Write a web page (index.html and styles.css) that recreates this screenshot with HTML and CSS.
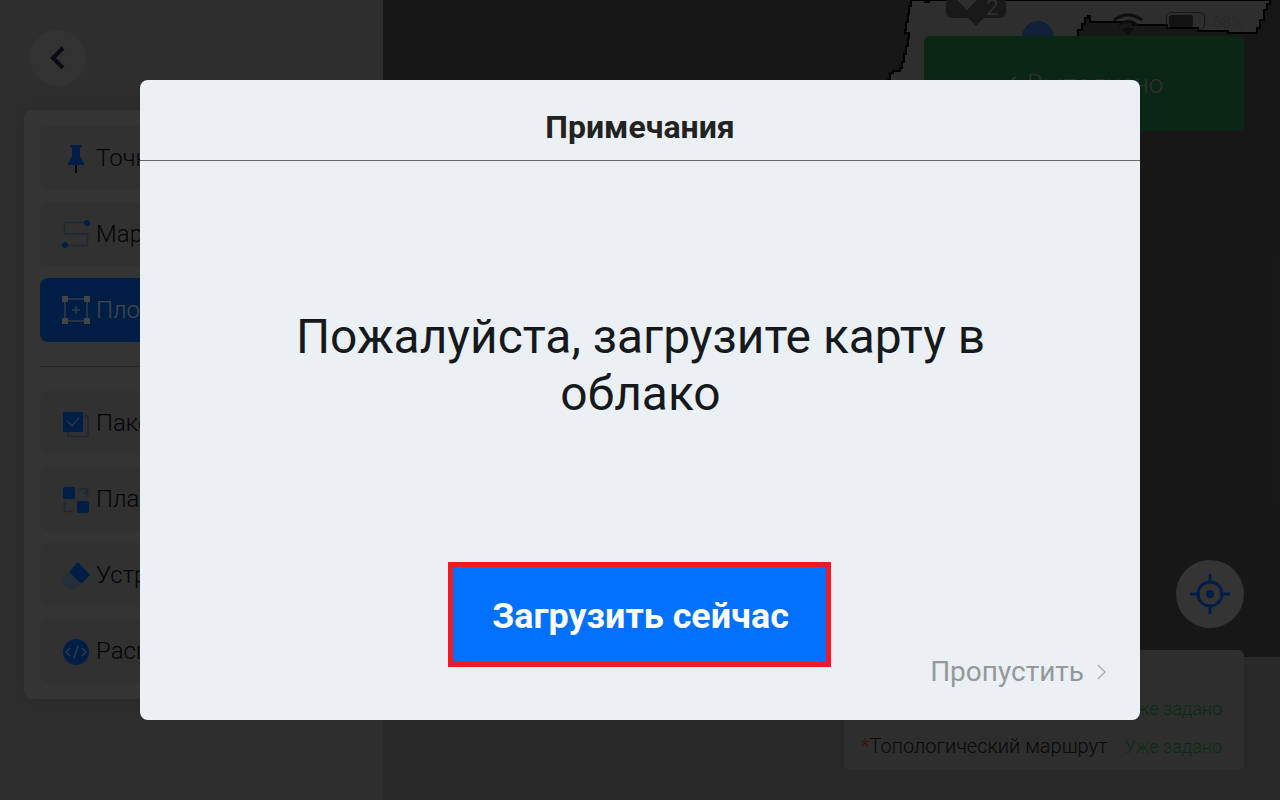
FILE: index.html
```html
<!DOCTYPE html>
<html lang="ru">
<head>
  <meta charset="UTF-8" />
  <meta name="viewport" content="width=device-width, initial-scale=1.0"/>
  <title>Примечания</title>
  <link rel="stylesheet" href="styles.css">
</head>
<body>
  <div class="app">
    <aside class="side">
      <button class="back-btn">
        <svg width="20" height="24" viewBox="0 0 20 24"><path d="M15 2 L5 12 L15 22" fill="none" stroke="#2a2a4a" stroke-width="4"/></svg>
      </button>

      <div class="tools">
        <div class="tool">
          <svg class="tool-icon" viewBox="0 -1 30 30"><path class="solid" d="M8 1 H20 L18 5 V13 L23 21 H5 L10 13 V5 Z"/><path d="M14 21 V30" stroke="#222" stroke-width="2"/></svg>
          <span>Точка</span>
        </div>
        <div class="tool">
          <svg class="tool-icon" viewBox="0 -1 30 30"><path class="line" d="M24 2.5 H2.5 V14 H25.5 V25.5 H4"/><circle class="solid" cx="25" cy="3" r="3"/><circle class="solid" cx="3" cy="25" r="3"/></svg>
          <span>Маршрут</span>
        </div>
        <div class="tool tool-active">
          <svg class="tool-icon" viewBox="0 -1 30 30"><path d="M3 3 H25 V25 H3 Z M14 10 V18 M10 14 H18" fill="none" stroke="#fff" stroke-opacity=".7" stroke-width="1.5"/><path class="corners" d="M0 0 H6 V6 H0 Z M22 0 H28 V6 H22 Z M0 22 H6 V28 H0 Z M22 22 H28 V28 H22 Z"/></svg>
          <span>Площадь</span>
        </div>
        <hr class="tools-line">
        <div class="tool">
          <svg class="tool-icon" viewBox="0 -3 30 30"><path class="line" d="M22 5 H26 V25.500 H6 V21"/><rect class="solid" x="1" y="1" width="20" height="20"/><path d="M5 10 L10 15 L17 7" fill="none" stroke="#fff" stroke-opacity=".6" stroke-width="1.500"/></svg>
          <span>Пакетное</span>
        </div>
        <div class="tool">
          <svg class="tool-icon" viewBox="0 -3 30 30"><rect class="solid" x="1" y="0" width="12" height="12" rx="2"/><rect class="solid" x="15" y="14" width="12" height="12" rx="2"/><path class="line" d="M17 2 H25.500 V10 M22 7 L25.500 2 M11 24.500 H2.500 V15"/></svg>
          <span>Планирование</span>
        </div>
        <div class="tool">
          <svg class="tool-icon" viewBox="0 -2 30 30"><path class="solid" d="M16 0 L28 13 L19 22 L7 10 Z"/><path class="pale" d="M7 10 L19 22 L11 27 Q9 28 7 27 L1 21 Q0 19 1 17 Z"/></svg>
          <span>Устранить</span>
        </div>
        <div class="tool">
          <svg class="tool-icon" viewBox="0 -2 30 30"><circle class="solid" cx="14" cy="14" r="13"/><path d="M8 10 L4 14 L8 18 M20 10 L24 14 L20 18 M16 8 L12 20" fill="none" stroke="#fff" stroke-opacity=".7" stroke-width="1.600"/></svg>
          <span>Расширение</span>
        </div>
      </div>
    </aside>

    <main class="map">
      <svg class="map-shape" width="897" height="160" viewBox="0 0 897 160" shape-rendering="crispEdges">
        <path d="M530 0 H528 V6 H526 V14 H525 V22 H523 V30 H522 V33 H526 V38 H525 V46 H523 V54 H521 V62 H519 V68 H517 V71 H510 V73 H507 V80 H505 V160 H695 V30 H699 V24 H702 V18 H705 V16 H707 V22 H750 V25 H784 V28 H815 V31 H845 V33 H874 V28 H877 V20 H881 V10 H884 V4 H887 V0 Z" fill="#aaa" stroke="#000" stroke-width="2"/>
        <path d="M541 0 H547 V3 H541 Z" fill="#000"/>
      </svg>

      <div class="tag"><span class="tag-mark"></span><span class="tag-num">2</span></div>
      <span class="dot"></span>

      <svg class="wifi" width="32" height="24" viewBox="0 0 32 24"><path d="M2 9 Q16 -1 30 9 M7 14 Q16 7 25 14" fill="none" stroke="#333" stroke-width="3"/><path d="M10 18 Q16 14 22 18 L16 24 Z" fill="#333"/></svg>
      <div class="battery"><span class="battery-level"></span></div>
      <span class="battery-text">68%</span>

      <div class="done-btn">✓ Выполнено</div>

      <button class="locate-btn">
        <svg width="40" height="40" viewBox="0 0 40 40"><circle cx="20" cy="20" r="12" fill="none" stroke="#0070ff" stroke-width="3"/><circle cx="20" cy="20" r="4" fill="#0070ff"/><path d="M20 0 V10 M20 30 V40 M0 20 H10 M30 20 H40" stroke="#0070ff" stroke-width="3"/></svg>
      </button>

      <div class="map-bottom">
        <div class="status">
          <div class="status-row"><span><i>*</i>Точка подзарядки</span><span class="status-ok">Уже задано</span></div>
          <div class="status-row"><span><i>*</i>Топологический маршрут</span><span class="status-ok">Уже задано</span></div>
        </div>
      </div>
    </main>

    <div class="overlay">
      <div class="modal">
        <div class="modal-head">Примечания</div>
        <div class="modal-body">
          <p class="message">Пожалуйста, загрузите карту в облако</p>
        </div>
        <div class="modal-foot">
          <button class="upload-btn">Загрузить сейчас</button>
          <div class="skip">
            Пропустить
            <svg width="10" height="16" viewBox="0 0 10 16"><path d="M1 1 L8 8 L1 15" fill="none" stroke="#a6aaad" stroke-width="1.300"/></svg>
          </div>
        </div>
      </div>
    </div>
  </div>
</body>
</html>
```

FILE: styles.css
```css
* {
  box-sizing: border-box;
}

body {
  margin: 0;
  font-family: Roboto, 'Liberation Sans', sans-serif;
  color: #111;
}

button {
  border: none;
  padding: 0;
  font-family: inherit;
}

.app {
  position: relative;
  display: flex;
  width: 1280px;
  height: 800px;
  overflow: hidden;
}

/* left column */
.side {
  width: 383px;
  padding: 30px 24px 0;
  background: #aaa;
}

.back-btn {
  display: flex;
  align-items: center;
  justify-content: center;
  width: 56px;
  height: 56px;
  margin-left: 6px;
  border-radius: 50%;
  background: #b4bab6;
}

.tools {
  margin-top: 24px;
  padding: 16px;
  border-radius: 8px;
  background: #c1c1c1;
  box-shadow: 0 0 20px rgba(0,0,0,0.15);
}

.tool {
  display: flex;
  align-items: center;
  gap: 4px;
  height: 64px;
  margin-bottom: 12px;
  padding-left: 22px;
  border-radius: 8px;
  background: #b4b4b4;
  font-size: 24px;
  font-weight: 300;
}

.tool:last-child {
  margin-bottom: 0;
}

.tool-active {
  background: #0070ff;
  color: #fff;
}

.tool-icon {
  width: 30px;
  height: 30px;
  flex-shrink: 0;
}

.solid { fill: #0070ff; }
.pale { fill: #8aaed8; }
.corners { fill: #fff; }
.line {
  fill: none;
  stroke: #6f93c6;
  stroke-width: 1.5;
}

.tools-line {
  height: 1px;
  margin: 24px 0;
  border: none;
  background: #8c8c8c;
}

/* map canvas */
.map {
  position: relative;
  flex: 1;
  background: #575757;
}

.map-shape {
  position: absolute;
  top: 0;
  left: 0;
}

.tag {
  position: absolute;
  top: -18px;
  left: 563px;
  display: flex;
  align-items: center;
  gap: 12px;
  width: 60px;
  height: 36px;
  padding-left: 14px;
  border-radius: 6px;
  background: #5c5e60;
  color: #aaa;
  font-size: 22px;
}

.tag::after {
  content: "";
  position: absolute;
  left: 22px;
  bottom: -8px;
  border: 8px solid transparent;
  border-bottom: none;
  border-top-color: #5c5e60;
}

.tag-mark {
  width: 14px;
  height: 14px;
  background: #aaa;
  transform: rotate(45deg);
}

.tag-num {
  margin-top: 14px;
}

.dot {
  position: absolute;
  top: 21px;
  left: 639px;
  width: 32px;
  height: 32px;
  border-radius: 50%;
  background: #3f77ce;
}

.wifi {
  position: absolute;
  top: 11px;
  left: 729px;
}

.battery {
  position: absolute;
  top: 12px;
  left: 783px;
  width: 39px;
  height: 18px;
  padding: 2px;
  border: 1px solid #555;
  border-radius: 5px;
}

.battery-level {
  display: block;
  width: 24px;
  height: 100%;
  border-radius: 3px;
  background: #444;
}

.battery-text {
  position: absolute;
  top: 13px;
  left: 830px;
  color: #999;
  font-size: 16px;
}

.done-btn {
  position: absolute;
  top: 36px;
  left: 541px;
  display: flex;
  align-items: center;
  justify-content: center;
  width: 320px;
  height: 95px;
  padding-right: 6px;
  border-radius: 6px;
  background: #288c50;
  color: #b0b0b0;
  font-size: 26px;
  font-weight: 300;
}

.locate-btn {
  position: absolute;
  top: 560px;
  left: 793px;
  display: flex;
  align-items: center;
  justify-content: center;
  width: 68px;
  height: 68px;
  border-radius: 50%;
  background: #c1c1c1;
}

.map-bottom {
  position: absolute;
  left: 0;
  right: 0;
  bottom: 0;
  height: 143px;
  background: #999;
}

.status {
  position: absolute;
  top: -7px;
  right: 36px;
  display: flex;
  flex-direction: column;
  justify-content: flex-end;
  gap: 14px;
  width: 400px;
  height: 120px;
  padding: 0 22px 12px 17px;
  border-radius: 6px;
  background: #aaa;
  color: #222;
  font-size: 20px;
  font-weight: 300;
}

.status-row {
  display: flex;
  justify-content: space-between;
  align-items: center;
  height: 24px;
}

.status-row i {
  color: #ff2a2a;
  font-style: normal;
}

.status-ok {
  color: #23a454;
  font-size: 18px;
}

/* dialog */
.overlay {
  position: absolute;
  inset: 0;
  display: flex;
  align-items: center;
  justify-content: center;
  background: rgba(0,0,0,0.73);
}

.modal {
  display: flex;
  flex-direction: column;
  width: 1000px;
  height: 640px;
  border-radius: 8px;
  background: #ebf0f4;
}

.modal-head {
  height: 81px;
  border-bottom: 1px solid #666;
  color: #222;
  font-size: 32px;
  font-weight: 700;
  line-height: 94px;
  text-align: center;
}

.modal-body {
  display: flex;
  justify-content: center;
  height: 401px;
  padding-top: 148px;
}

.message {
  width: 760px;
  margin: 0 0 0 1px;
  color: #16191c;
  font-size: 47.9px;
  line-height: 57px;
  text-align: center;
}

.modal-foot {
  display: grid;
  grid-template-columns: 1fr auto 1fr;
  flex: 1;
}

.upload-btn {
  grid-column: 2;
  align-self: start;
  width: 383px;
  height: 105px;
  margin-left: -1px;
  padding: 3px 0 0 2px;
  border: 5px solid #ed1c24;
  background: #0070ff;
  color: #fff;
  font-size: 35.9px;
  font-weight: 700;
}

.skip {
  display: flex;
  align-items: center;
  justify-content: flex-end;
  align-self: start;
  gap: 13px;
  margin-top: 93px;
  padding-right: 33px;
  color: #94989b;
  font-size: 28px;
}
```
